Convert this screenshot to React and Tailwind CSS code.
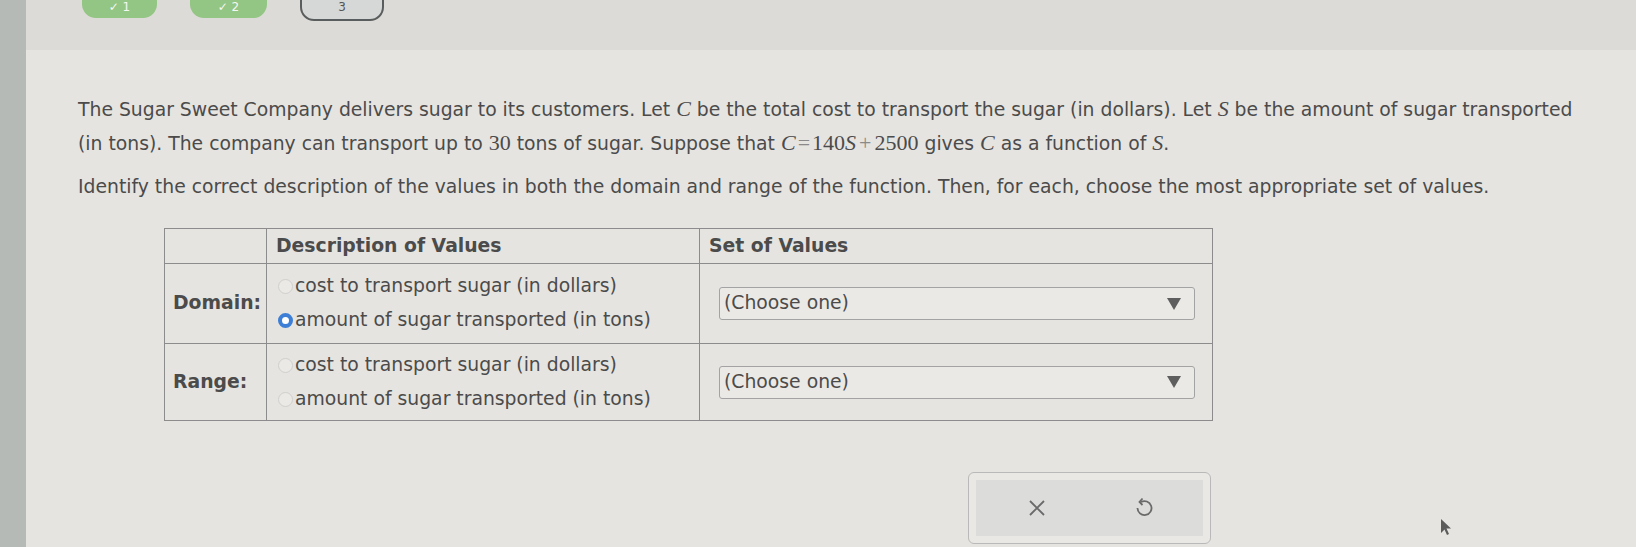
import React from 'react';

function Radio({ checked }) {
  return checked ? (
    <span className="inline-block w-[15px] h-[15px] rounded-full border-[4px] border-[#3d7fd6] bg-white mr-[2px] shrink-0" />
  ) : (
    <span className="inline-block w-[15px] h-[15px] rounded-full border border-[#cfcfcf] bg-[#ebe9e5] mr-[2px] shrink-0" />
  );
}

function Option({ checked, children }) {
  return (
    <div className="flex items-center h-[34px]">
      <Radio checked={checked} />
      <span>{children}</span>
    </div>
  );
}

function Select() {
  return (
    <div className="flex items-center justify-between h-[33px] w-[476px] border border-[#a3a3a3] rounded-[3px] bg-[#ebe9e5] pl-[4px] pr-[12px]">
      <span>(Choose one)</span>
      <svg width="16" height="14" viewBox="0 0 16 14">
        <path d="M1 1 L15 1 L8 13 Z" fill="#5e5e5e" />
      </svg>
    </div>
  );
}

const V = ({ children }) => (
  <span className="font-['Liberation_Serif'] italic text-[22px]">{children}</span>
);
const N = ({ children }) => (
  <span className="font-['Liberation_Serif'] text-[22px]">{children}</span>
);

export default function App() {
  return (
    <div className="relative w-[1636px] h-[547px] flex overflow-hidden bg-[#e6e4e0] text-[#4b4b4b] font-['DejaVu_Sans',sans-serif] text-[18.8px]">
      <div className="w-[26px] bg-[#b6bab6] shrink-0" />
      <div className="flex-1 flex flex-col">
        {/* top step tabs */}
        <div className="h-[50px] bg-[#dddbd7] flex items-start pl-[56px] gap-[33px] shrink-0">
          <div className="-mt-[22px] w-[75px] h-[40px] rounded-[14px] bg-[#93c585] flex items-end justify-center pb-[5px] text-[#f4f8f2] text-[12px] leading-none">
            ✓ 1
          </div>
          <div className="-mt-[22px] w-[77px] h-[40px] rounded-[14px] bg-[#93c585] flex items-end justify-center pb-[5px] text-[#f4f8f2] text-[12px] leading-none">
            ✓ 2
          </div>
          <div className="-mt-[20px] w-[84px] h-[41px] rounded-[14px] border-2 border-[#5a5d5e] bg-[#d6d8d7] flex items-end justify-center pb-[6px] text-[#555] text-[12px] leading-none">
            3
          </div>
        </div>

        <div className="flex-1 pl-[52px] pt-[42px]">
          <p className="leading-[33px] whitespace-nowrap">
            The Sugar Sweet Company delivers sugar to its customers. Let <V>C</V> be the total cost to transport the sugar (in dollars). Let <V>S</V> be the amount of sugar transported
            <br />
            (in tons). The company can transport up to <N>30</N> tons of sugar. Suppose that <V>C</V>
            <N>
              <span className="text-[#8a8a8a] mx-[2px]">=</span>140
            </N>
            <V>S</V>
            <N>
              <span className="text-[#8a8a8a] mx-[3px]">+</span>2500
            </N>{' '}
            gives <V>C</V> as a function of <V>S</V>.
          </p>
          <p className="leading-[33px] mt-[10px] whitespace-nowrap">
            Identify the correct description of the values in both the domain and range of the function. Then, for each, choose the most appropriate set of values.
          </p>

          <table className="ml-[86px] mt-[25px] border-collapse border border-[#8c8c8c] w-[1049px]">
            <tbody>
              <tr className="h-[35px]">
                <td className="w-[102px] border border-[#8c8c8c]" />
                <td className="w-[433px] border border-[#8c8c8c] pl-[9px] font-bold">Description of Values</td>
                <td className="border border-[#8c8c8c] pl-[9px] font-bold">Set of Values</td>
              </tr>
              <tr className="h-[80px]">
                <td className="border border-[#8c8c8c] pl-[8px] font-bold">Domain:</td>
                <td className="border border-[#8c8c8c] pl-[11px]">
                  <Option>cost to transport sugar (in dollars)</Option>
                  <Option checked>amount of sugar transported (in tons)</Option>
                </td>
                <td className="border border-[#8c8c8c] pl-[19px]">
                  <Select />
                </td>
              </tr>
              <tr className="h-[77px]">
                <td className="border border-[#8c8c8c] pl-[8px] font-bold">Range:</td>
                <td className="border border-[#8c8c8c] pl-[11px]">
                  <Option>cost to transport sugar (in dollars)</Option>
                  <Option>amount of sugar transported (in tons)</Option>
                </td>
                <td className="border border-[#8c8c8c] pl-[19px]">
                  <Select />
                </td>
              </tr>
            </tbody>
          </table>

          <div className="ml-[890px] mt-[51px] w-[243px] h-[72px] rounded-[6px] border border-[#b9b9b9] bg-[#e9e8e5] p-[7px]">
            <div className="w-full h-full bg-[#dcdcdb] flex items-center justify-around pr-[6px]">
              <svg width="20" height="20" viewBox="0 0 20 20" className="ml-[8px]">
                <path d="M3 3 L17 17 M17 3 L3 17" stroke="#6a6a6a" strokeWidth="1.8" fill="none" />
              </svg>
              <svg width="20" height="22" viewBox="0 0 20 22">
                <path d="M7 5 A7 7 0 1 1 3.5 11" stroke="#6a6a6a" strokeWidth="1.8" fill="none" />
                <path d="M8.5 1.5 L5.5 5 L8.5 8" stroke="#6a6a6a" strokeWidth="1.8" fill="none" />
              </svg>
            </div>
          </div>
        </div>
      </div>

      {/* mouse cursor */}
      <svg className="absolute left-[1439px] top-[518px]" width="16" height="20" viewBox="0 0 16 20">
        <path d="M2 1 L2 15 L5.5 11.5 L8 17 L10 16 L7.5 10.5 L12 10.5 Z" fill="#5b5b5b" />
      </svg>
    </div>
  );
}
